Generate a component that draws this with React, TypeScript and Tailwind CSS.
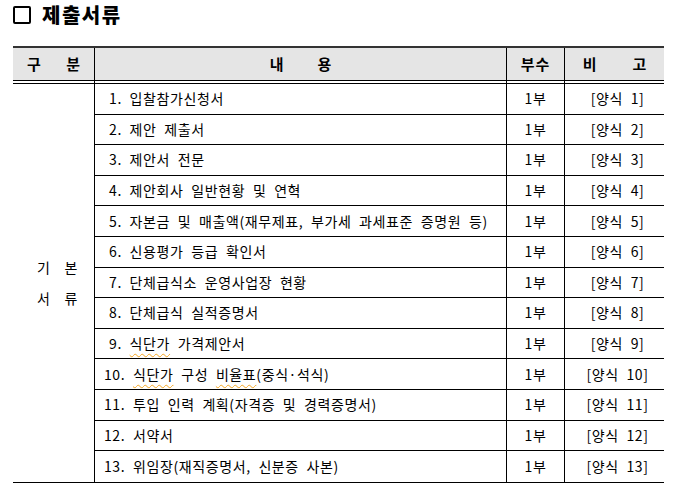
import React from "react";

const FONT = { fontFamily: '"Noto Sans CJK KR", "Noto Sans", sans-serif' };

function Spell({ children }: { children: React.ReactNode }) {
  return (
    <span className="underline decoration-wavy decoration-[#f5a623] decoration-1 underline-offset-[4px]">
      {children}
    </span>
  );
}

const rows: { n: number; t: React.ReactNode }[] = [
  { n: 1, t: "입찰참가신청서" },
  { n: 2, t: "제안 제출서" },
  { n: 3, t: "제안서 전문" },
  { n: 4, t: "제안회사 일반현황 및 연혁" },
  { n: 5, t: "자본금 및 매출액(재무제표, 부가세 과세표준 증명원 등)" },
  { n: 6, t: "신용평가 등급 확인서" },
  { n: 7, t: "단체급식소 운영사업장 현황" },
  { n: 8, t: "단체급식 실적증명서" },
  {
    n: 9,
    t: (
      <>
        <Spell>식단가</Spell> 가격제안서
      </>
    ),
  },
  {
    n: 10,
    t: (
      <>
        <Spell>식단가</Spell> 구성 <Spell>비율표</Spell>(중식·석식)
      </>
    ),
  },
  { n: 11, t: "투입 인력 계획(자격증 및 경력증명서)" },
  { n: 12, t: "서약서" },
  { n: 13, t: "위임장(재직증명서, 신분증 사본)" },
];

export default function App() {
  return (
    <div className="w-[679px] h-[503px] bg-white text-black relative" style={FONT}>
      <div className="flex items-center h-[30px] pl-[13px] gap-[11px]">
        <div className="w-[18px] h-[18px] border-2 border-black rounded-[2px]" />
        <div className="text-[20px] font-black tracking-[1.5px]">제출서류</div>
      </div>
      <div className="ml-[13px] mt-[16px] w-[651px]">
        {/* header */}
        <div className="border-t-2 border-[#333] bg-[#e5e5e5] flex h-[35px] border-b border-b-black text-[15px] font-bold">
          <div className="w-[82px] flex items-center justify-between px-[14px] border-r border-black">
            <span>구</span>
            <span>분</span>
          </div>
          <div className="w-[412px] flex items-center justify-center gap-[34px] border-r border-black">
            <span>내</span>
            <span>용</span>
          </div>
          <div className="w-[58px] flex items-center justify-center border-r border-black tracking-[1px]">부수</div>
          <div className="flex-1 flex items-center justify-center gap-[36px]">
            <span>비</span>
            <span>고</span>
          </div>
        </div>
        <div className="flex h-[2px]">
          <div className="w-[82px] border-r border-black" />
          <div className="w-[412px] border-r border-black" />
          <div className="w-[58px] border-r border-black" />
          <div className="flex-1" />
        </div>
        {/* body */}
        <div className="flex border-t border-black border-b text-[14px]" style={{ letterSpacing: "0.6px" }}>
          <div className="w-[82px] border-r border-black flex flex-col items-center justify-center leading-[31px] text-[14px] pl-[8px]">
            <div className="flex gap-[14px]">
              <span>기</span>
              <span>본</span>
            </div>
            <div className="flex gap-[14px]">
              <span>서</span>
              <span>류</span>
            </div>
          </div>
          <div className="flex-1 flex flex-col">
            {rows.map((r, i) => (
              <div
                key={r.n}
                className={`flex h-[30.6px] ${i < rows.length - 1 ? "border-b border-black" : ""}`}
              >
                <div
                  className={`w-[412px] border-r border-black flex items-center whitespace-pre ${
                    r.n < 10 ? "pl-[14px]" : "pl-[9px]"
                  }`}
                  style={{ wordSpacing: "4px" }}
                >
                  {r.n}. {r.t}
                </div>
                <div className="w-[58px] border-r border-black flex items-center justify-center">1부</div>
                <div className="flex-1 flex items-center justify-center pl-[6px]" style={{ wordSpacing: "4px" }}>
                  [양식 {r.n}]
                </div>
              </div>
            ))}
          </div>
        </div>
      </div>
    </div>
  );
}
